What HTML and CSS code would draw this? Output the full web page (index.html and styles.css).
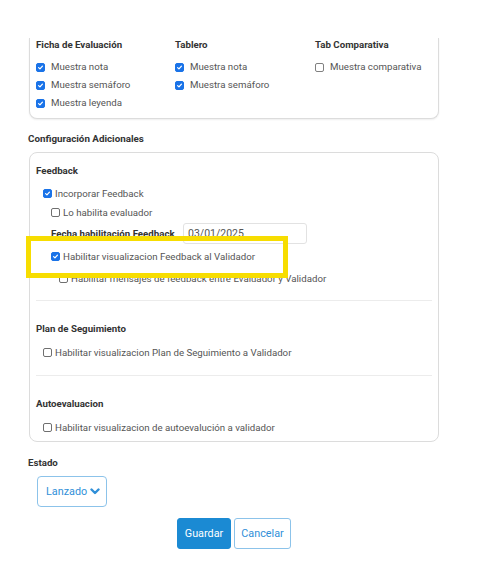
FILE: index.html
```html
<!DOCTYPE html>
<html lang="es">
<head>
<meta charset="utf-8">
<title>Configuración</title>
<link rel="stylesheet" href="styles.css">
</head>
<body>
<div class="page">
  <div class="top-gap"></div>
  <div class="card card-top">
    <div class="col">
      <div class="col-title">Ficha de Evaluación</div>
      <label class="opt"><span class="cb cb-on"><svg viewBox="0 0 10 10"><path d="M2.3 5.2 L4.2 7 L7.8 3" /></svg></span>Muestra nota</label>
      <label class="opt"><span class="cb cb-on"><svg viewBox="0 0 10 10"><path d="M2.3 5.2 L4.2 7 L7.8 3" /></svg></span>Muestra semáforo</label>
      <label class="opt"><span class="cb cb-on"><svg viewBox="0 0 10 10"><path d="M2.3 5.2 L4.2 7 L7.8 3" /></svg></span>Muestra leyenda</label>
    </div>
    <div class="col">
      <div class="col-title">Tablero</div>
      <label class="opt"><span class="cb cb-on"><svg viewBox="0 0 10 10"><path d="M2.3 5.2 L4.2 7 L7.8 3" /></svg></span>Muestra nota</label>
      <label class="opt"><span class="cb cb-on"><svg viewBox="0 0 10 10"><path d="M2.3 5.2 L4.2 7 L7.8 3" /></svg></span>Muestra semáforo</label>
    </div>
    <div class="col">
      <div class="col-title">Tab Comparativa</div>
      <label class="opt"><span class="cb"></span>Muestra comparativa</label>
    </div>
  </div>

  <div class="section-title">Configuración Adicionales</div>

  <div class="card card-extra">
    <div class="group g-first">
      <div class="group-title">Feedback</div>
      <label class="row lvl1"><span class="cb2 cb-on"><svg viewBox="0 0 10 10"><path d="M2.3 5.2 L4.2 7 L7.8 3" /></svg></span>Incorporar Feedback</label>
      <label class="row lvl2"><span class="cb2"></span>Lo habilita evaluador</label>
      <div class="date-row">
        <span class="date-label">Fecha habilitación Feedback</span>
        <span class="date-input">03/01/2025</span>
      </div>
      <label class="row lvl2 hl-row"><span class="cb2 cb-on"><svg viewBox="0 0 10 10"><path d="M2.3 5.2 L4.2 7 L7.8 3" /></svg></span>Habilitar visualizacion Feedback al Validador</label>
      <label class="row lvl3 msg-row"><span class="cb2"></span>Habilitar mensajes de feedback entre Evaluador y Validador</label>
    </div>
    <div class="divider"></div>
    <div class="group">
      <div class="group-title">Plan de Seguimiento</div>
      <label class="row lvl1"><span class="cb2"></span>Habilitar visualizacion Plan de Seguimiento a Validador</label>
    </div>
    <div class="divider"></div>
    <div class="group">
      <div class="group-title">Autoevaluacion</div>
      <label class="row lvl1"><span class="cb2"></span>Habilitar visualizacion de autoevalución a validador</label>
    </div>
    <div class="highlight"></div>
  </div>

  <div class="section-title estado-title">Estado</div>
  <div class="estado">
    <button class="dropdown">Lanzado<svg class="chev" viewBox="0 0 10 7"><path d="M1.5 1.5 L5 5 L8.5 1.5" /></svg></button>
  </div>

  <div class="actions">
    <button class="btn btn-primary">Guardar</button>
    <button class="btn btn-outline">Cancelar</button>
  </div>
</div>
</body>
</html>
```

FILE: styles.css
```css
* { box-sizing: border-box; }
html, body { margin: 0; padding: 0; background: #fff; }
body {
  font-family: Roboto, "Liberation Sans", Arial, sans-serif;
  font-size: 9.7px;
  color: #555;
}
.page { width: 487px; }
.top-gap { height: 38px; }

.card {
  margin-left: 29px;
  width: 410px;
  border: 1px solid #dcdcdc;
  border-radius: 8px;
  background: #fff;
}
.card-top {
  border-top: none;
  border-radius: 0 0 8px 8px;
  display: grid;
  grid-template-columns: 139px 140px 1fr;
  padding: 0 0 6px 6px;
  box-shadow: 0 1px 2px rgba(0,0,0,0.07);
}
.col-title {
  font-weight: 700;
  color: #333;
  height: 14px;
  line-height: 14px;
  margin-bottom: 6px;
  font-size: 9.7px;
  white-space: nowrap;
}
.opt {
  display: flex;
  align-items: center;
  height: 18px;
  line-height: 18px;
  color: #555;
  white-space: nowrap;
}
.cb {
  width: 9px;
  height: 9px;
  border: 1px solid #808080;
  border-radius: 2px;
  margin-right: 6px;
  flex: none;
  display: inline-flex;
  background: #fff;
}
.cb svg, .cb2 svg { width: 100%; height: 100%; overflow: visible; }
.cb svg path, .cb2 svg path {
  fill: none;
  stroke: #fff;
  stroke-width: 1.8;
  stroke-linecap: round;
  stroke-linejoin: round;
}
.cb-on { background: #1a73e8; border-color: #1a73e8; }

.section-title {
  font-weight: 700;
  color: #333;
  font-size: 9.8px;
  margin: 13px 0 6px 28px;
  height: 14px;
  line-height: 14px;
}

.card-extra {
  position: relative;
  padding: 0 6px 4px 6px;
}

.group { padding-top: 21px; }
.g-first { padding-top: 11px; }
.group-title {
  font-weight: 700;
  color: #333;
  font-size: 9.7px;
  height: 14px;
  line-height: 14px;
  margin-bottom: 6px;
}
.row {
  display: flex;
  align-items: center;
  height: 19px;
  line-height: 19px;
  color: #555;
  white-space: nowrap;
}
.group:not(.g-first) .group-title { margin-bottom: 7px; }
.lvl1 { padding-left: 7px; }
.lvl2 { padding-left: 15px; }
.lvl3 { padding-left: 23px; }
.cb2 {
  width: 9px;
  height: 9px;
  border: 1px solid #6f6f6f;
  border-radius: 2px;
  margin-right: 3px;
  flex: none;
  display: inline-flex;
  background: #fff;
}
.cb2.cb-on { background: #1a73e8; border-color: #1a73e8; }

.date-row {
  display: flex;
  align-items: center;
  padding-left: 15px;
  height: 23px;
}
.date-label {
  font-weight: 700;
  color: #333;
  font-size: 9.7px;
  width: 132px;
  flex: none;
  white-space: nowrap;
}
.date-input {
  width: 124px;
  height: 21px;
  border: 1px solid #e2e2e2;
  border-radius: 3px;
  padding-left: 4px;
  line-height: 19px;
  color: #555;
  font-size: 10.5px;
}
.hl-row { margin-top: 1px; height: 20px; }
.msg-row { margin-top: 2px; height: 20px; }

.highlight {
  position: absolute;
  left: -4px;
  top: 83px;
  width: 262px;
  height: 42px;
  border: 5px solid #f7dd00;
  pointer-events: none;
}

.divider {
  height: 1px;
  background: #ececec;
  margin-top: 12px;
}
.group:not(.g-first) + .divider { margin-top: 13px; }

.estado-title { margin: 14px 0 0 28px; font-size: 9.7px; }
.estado { padding: 6px 0 0 37px; }
.dropdown {
  font-family: Roboto, "Liberation Sans", Arial, sans-serif;
  font-size: 10.8px;
  color: #2f8fd8;
  background: #fff;
  border: 1px solid #8cc3ea;
  border-radius: 4px;
  width: 70px;
  height: 31px;
  padding: 0 0 0 8px;
  display: flex;
  align-items: center;
  gap: 3px;
  cursor: pointer;
}
.chev { width: 10px; height: 7px; flex: none; }
.chev path {
  fill: none;
  stroke: #2f8fd8;
  stroke-width: 2.4;
  stroke-linecap: round;
  stroke-linejoin: round;
}

.actions {
  display: flex;
  gap: 3px;
  padding: 11px 0 0 177px;
}
.btn {
  font-family: Roboto, "Liberation Sans", Arial, sans-serif;
  font-size: 10.8px;
  height: 31px;
  border-radius: 3px;
  padding: 0;
  cursor: pointer;
}
.btn-primary {
  width: 54px;
  background: #1b8ad3;
  border: 1px solid #1b8ad3;
  color: #fff;
}
.btn-outline {
  width: 57px;
  background: #fff;
  border: 1px solid #8cc3ea;
  color: #2f8fd8;
}
```
